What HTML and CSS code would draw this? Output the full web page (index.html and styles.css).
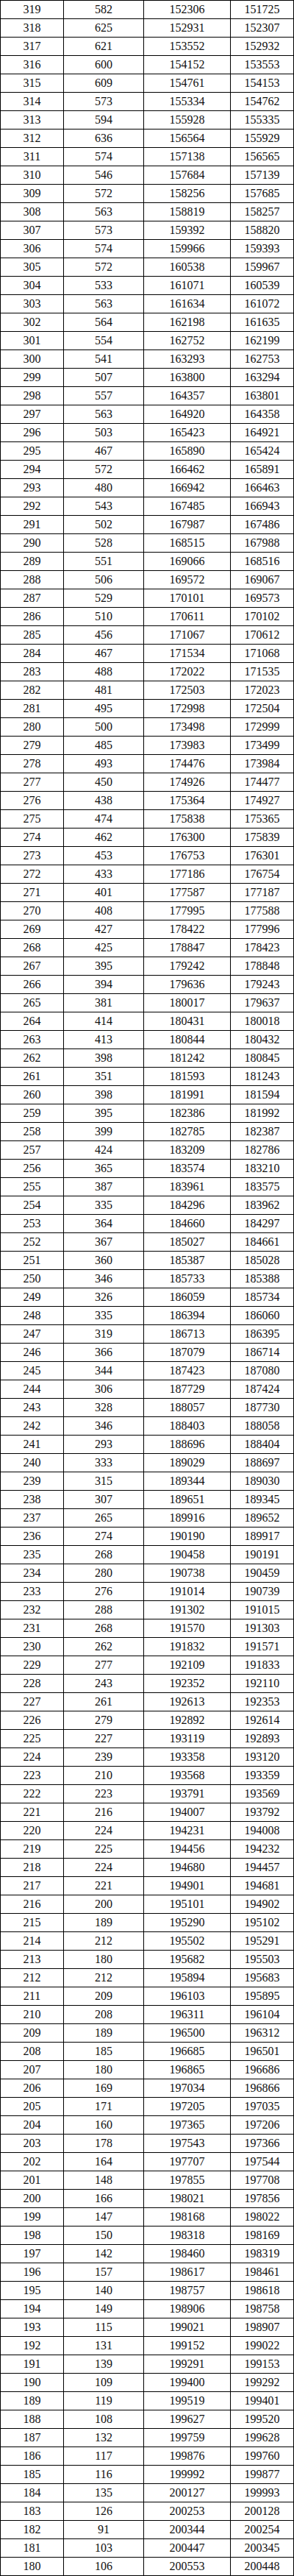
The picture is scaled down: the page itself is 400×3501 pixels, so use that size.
FILE: index.html
```html
<!DOCTYPE html>
<html lang="zh-CN">
<head>
<meta charset="utf-8">
<title>一分一段表</title>
<link rel="stylesheet" href="styles.css">
</head>
<body>
<table class="score-table">
<colgroup><col class="c-score"><col class="c-count"><col class="c-cum"><col class="c-rank"></colgroup>
<tbody>
<tr><td>319</td><td>582</td><td>152306</td><td>151725</td></tr>
<tr><td>318</td><td>625</td><td>152931</td><td>152307</td></tr>
<tr><td>317</td><td>621</td><td>153552</td><td>152932</td></tr>
<tr><td>316</td><td>600</td><td>154152</td><td>153553</td></tr>
<tr><td>315</td><td>609</td><td>154761</td><td>154153</td></tr>
<tr><td>314</td><td>573</td><td>155334</td><td>154762</td></tr>
<tr><td>313</td><td>594</td><td>155928</td><td>155335</td></tr>
<tr><td>312</td><td>636</td><td>156564</td><td>155929</td></tr>
<tr><td>311</td><td>574</td><td>157138</td><td>156565</td></tr>
<tr><td>310</td><td>546</td><td>157684</td><td>157139</td></tr>
<tr><td>309</td><td>572</td><td>158256</td><td>157685</td></tr>
<tr><td>308</td><td>563</td><td>158819</td><td>158257</td></tr>
<tr><td>307</td><td>573</td><td>159392</td><td>158820</td></tr>
<tr><td>306</td><td>574</td><td>159966</td><td>159393</td></tr>
<tr><td>305</td><td>572</td><td>160538</td><td>159967</td></tr>
<tr><td>304</td><td>533</td><td>161071</td><td>160539</td></tr>
<tr><td>303</td><td>563</td><td>161634</td><td>161072</td></tr>
<tr><td>302</td><td>564</td><td>162198</td><td>161635</td></tr>
<tr><td>301</td><td>554</td><td>162752</td><td>162199</td></tr>
<tr><td>300</td><td>541</td><td>163293</td><td>162753</td></tr>
<tr><td>299</td><td>507</td><td>163800</td><td>163294</td></tr>
<tr><td>298</td><td>557</td><td>164357</td><td>163801</td></tr>
<tr><td>297</td><td>563</td><td>164920</td><td>164358</td></tr>
<tr><td>296</td><td>503</td><td>165423</td><td>164921</td></tr>
<tr><td>295</td><td>467</td><td>165890</td><td>165424</td></tr>
<tr><td>294</td><td>572</td><td>166462</td><td>165891</td></tr>
<tr><td>293</td><td>480</td><td>166942</td><td>166463</td></tr>
<tr><td>292</td><td>543</td><td>167485</td><td>166943</td></tr>
<tr><td>291</td><td>502</td><td>167987</td><td>167486</td></tr>
<tr><td>290</td><td>528</td><td>168515</td><td>167988</td></tr>
<tr><td>289</td><td>551</td><td>169066</td><td>168516</td></tr>
<tr><td>288</td><td>506</td><td>169572</td><td>169067</td></tr>
<tr><td>287</td><td>529</td><td>170101</td><td>169573</td></tr>
<tr><td>286</td><td>510</td><td>170611</td><td>170102</td></tr>
<tr><td>285</td><td>456</td><td>171067</td><td>170612</td></tr>
<tr><td>284</td><td>467</td><td>171534</td><td>171068</td></tr>
<tr><td>283</td><td>488</td><td>172022</td><td>171535</td></tr>
<tr><td>282</td><td>481</td><td>172503</td><td>172023</td></tr>
<tr><td>281</td><td>495</td><td>172998</td><td>172504</td></tr>
<tr><td>280</td><td>500</td><td>173498</td><td>172999</td></tr>
<tr><td>279</td><td>485</td><td>173983</td><td>173499</td></tr>
<tr><td>278</td><td>493</td><td>174476</td><td>173984</td></tr>
<tr><td>277</td><td>450</td><td>174926</td><td>174477</td></tr>
<tr><td>276</td><td>438</td><td>175364</td><td>174927</td></tr>
<tr><td>275</td><td>474</td><td>175838</td><td>175365</td></tr>
<tr><td>274</td><td>462</td><td>176300</td><td>175839</td></tr>
<tr><td>273</td><td>453</td><td>176753</td><td>176301</td></tr>
<tr><td>272</td><td>433</td><td>177186</td><td>176754</td></tr>
<tr><td>271</td><td>401</td><td>177587</td><td>177187</td></tr>
<tr><td>270</td><td>408</td><td>177995</td><td>177588</td></tr>
<tr><td>269</td><td>427</td><td>178422</td><td>177996</td></tr>
<tr><td>268</td><td>425</td><td>178847</td><td>178423</td></tr>
<tr><td>267</td><td>395</td><td>179242</td><td>178848</td></tr>
<tr><td>266</td><td>394</td><td>179636</td><td>179243</td></tr>
<tr><td>265</td><td>381</td><td>180017</td><td>179637</td></tr>
<tr><td>264</td><td>414</td><td>180431</td><td>180018</td></tr>
<tr><td>263</td><td>413</td><td>180844</td><td>180432</td></tr>
<tr><td>262</td><td>398</td><td>181242</td><td>180845</td></tr>
<tr><td>261</td><td>351</td><td>181593</td><td>181243</td></tr>
<tr><td>260</td><td>398</td><td>181991</td><td>181594</td></tr>
<tr><td>259</td><td>395</td><td>182386</td><td>181992</td></tr>
<tr><td>258</td><td>399</td><td>182785</td><td>182387</td></tr>
<tr><td>257</td><td>424</td><td>183209</td><td>182786</td></tr>
<tr><td>256</td><td>365</td><td>183574</td><td>183210</td></tr>
<tr><td>255</td><td>387</td><td>183961</td><td>183575</td></tr>
<tr><td>254</td><td>335</td><td>184296</td><td>183962</td></tr>
<tr><td>253</td><td>364</td><td>184660</td><td>184297</td></tr>
<tr><td>252</td><td>367</td><td>185027</td><td>184661</td></tr>
<tr><td>251</td><td>360</td><td>185387</td><td>185028</td></tr>
<tr><td>250</td><td>346</td><td>185733</td><td>185388</td></tr>
<tr><td>249</td><td>326</td><td>186059</td><td>185734</td></tr>
<tr><td>248</td><td>335</td><td>186394</td><td>186060</td></tr>
<tr><td>247</td><td>319</td><td>186713</td><td>186395</td></tr>
<tr><td>246</td><td>366</td><td>187079</td><td>186714</td></tr>
<tr><td>245</td><td>344</td><td>187423</td><td>187080</td></tr>
<tr><td>244</td><td>306</td><td>187729</td><td>187424</td></tr>
<tr><td>243</td><td>328</td><td>188057</td><td>187730</td></tr>
<tr><td>242</td><td>346</td><td>188403</td><td>188058</td></tr>
<tr><td>241</td><td>293</td><td>188696</td><td>188404</td></tr>
<tr><td>240</td><td>333</td><td>189029</td><td>188697</td></tr>
<tr><td>239</td><td>315</td><td>189344</td><td>189030</td></tr>
<tr><td>238</td><td>307</td><td>189651</td><td>189345</td></tr>
<tr><td>237</td><td>265</td><td>189916</td><td>189652</td></tr>
<tr><td>236</td><td>274</td><td>190190</td><td>189917</td></tr>
<tr><td>235</td><td>268</td><td>190458</td><td>190191</td></tr>
<tr><td>234</td><td>280</td><td>190738</td><td>190459</td></tr>
<tr><td>233</td><td>276</td><td>191014</td><td>190739</td></tr>
<tr><td>232</td><td>288</td><td>191302</td><td>191015</td></tr>
<tr><td>231</td><td>268</td><td>191570</td><td>191303</td></tr>
<tr><td>230</td><td>262</td><td>191832</td><td>191571</td></tr>
<tr><td>229</td><td>277</td><td>192109</td><td>191833</td></tr>
<tr><td>228</td><td>243</td><td>192352</td><td>192110</td></tr>
<tr><td>227</td><td>261</td><td>192613</td><td>192353</td></tr>
<tr><td>226</td><td>279</td><td>192892</td><td>192614</td></tr>
<tr><td>225</td><td>227</td><td>193119</td><td>192893</td></tr>
<tr><td>224</td><td>239</td><td>193358</td><td>193120</td></tr>
<tr><td>223</td><td>210</td><td>193568</td><td>193359</td></tr>
<tr><td>222</td><td>223</td><td>193791</td><td>193569</td></tr>
<tr><td>221</td><td>216</td><td>194007</td><td>193792</td></tr>
<tr><td>220</td><td>224</td><td>194231</td><td>194008</td></tr>
<tr><td>219</td><td>225</td><td>194456</td><td>194232</td></tr>
<tr><td>218</td><td>224</td><td>194680</td><td>194457</td></tr>
<tr><td>217</td><td>221</td><td>194901</td><td>194681</td></tr>
<tr><td>216</td><td>200</td><td>195101</td><td>194902</td></tr>
<tr><td>215</td><td>189</td><td>195290</td><td>195102</td></tr>
<tr><td>214</td><td>212</td><td>195502</td><td>195291</td></tr>
<tr><td>213</td><td>180</td><td>195682</td><td>195503</td></tr>
<tr><td>212</td><td>212</td><td>195894</td><td>195683</td></tr>
<tr><td>211</td><td>209</td><td>196103</td><td>195895</td></tr>
<tr><td>210</td><td>208</td><td>196311</td><td>196104</td></tr>
<tr><td>209</td><td>189</td><td>196500</td><td>196312</td></tr>
<tr><td>208</td><td>185</td><td>196685</td><td>196501</td></tr>
<tr><td>207</td><td>180</td><td>196865</td><td>196686</td></tr>
<tr><td>206</td><td>169</td><td>197034</td><td>196866</td></tr>
<tr><td>205</td><td>171</td><td>197205</td><td>197035</td></tr>
<tr><td>204</td><td>160</td><td>197365</td><td>197206</td></tr>
<tr><td>203</td><td>178</td><td>197543</td><td>197366</td></tr>
<tr><td>202</td><td>164</td><td>197707</td><td>197544</td></tr>
<tr><td>201</td><td>148</td><td>197855</td><td>197708</td></tr>
<tr><td>200</td><td>166</td><td>198021</td><td>197856</td></tr>
<tr><td>199</td><td>147</td><td>198168</td><td>198022</td></tr>
<tr><td>198</td><td>150</td><td>198318</td><td>198169</td></tr>
<tr><td>197</td><td>142</td><td>198460</td><td>198319</td></tr>
<tr><td>196</td><td>157</td><td>198617</td><td>198461</td></tr>
<tr><td>195</td><td>140</td><td>198757</td><td>198618</td></tr>
<tr><td>194</td><td>149</td><td>198906</td><td>198758</td></tr>
<tr><td>193</td><td>115</td><td>199021</td><td>198907</td></tr>
<tr><td>192</td><td>131</td><td>199152</td><td>199022</td></tr>
<tr><td>191</td><td>139</td><td>199291</td><td>199153</td></tr>
<tr><td>190</td><td>109</td><td>199400</td><td>199292</td></tr>
<tr><td>189</td><td>119</td><td>199519</td><td>199401</td></tr>
<tr><td>188</td><td>108</td><td>199627</td><td>199520</td></tr>
<tr><td>187</td><td>132</td><td>199759</td><td>199628</td></tr>
<tr><td>186</td><td>117</td><td>199876</td><td>199760</td></tr>
<tr><td>185</td><td>116</td><td>199992</td><td>199877</td></tr>
<tr><td>184</td><td>135</td><td>200127</td><td>199993</td></tr>
<tr><td>183</td><td>126</td><td>200253</td><td>200128</td></tr>
<tr><td>182</td><td>91</td><td>200344</td><td>200254</td></tr>
<tr><td>181</td><td>103</td><td>200447</td><td>200345</td></tr>
<tr><td>180</td><td>106</td><td>200553</td><td>200448</td></tr>
</tbody>
</table>
</body>
</html>
```
FILE: styles.css
```css
html, body {
  margin: 0;
  padding: 0;
  background: #ffffff;
}

.score-table {
  width: 400px;
  table-layout: fixed;
  border-collapse: separate;
  border-spacing: 0;
  border-top: 1px solid #000;
  border-left: 1px solid #000;
  font-family: "Liberation Serif", "Noto Sans CJK SC", serif;
  font-size: 16px;
  color: #111;
}

.c-score { width: 86px; }
.c-count { width: 109px; }
.c-cum { width: 118px; }
.c-rank { width: 86px; }

.score-table td {
  box-sizing: border-box;
  height: 25px;
  padding: 0;
  border-right: 1px solid #000;
  border-bottom: 1px solid #000;
  text-align: center;
  vertical-align: middle;
  line-height: 24px;
  white-space: nowrap;
}
```
